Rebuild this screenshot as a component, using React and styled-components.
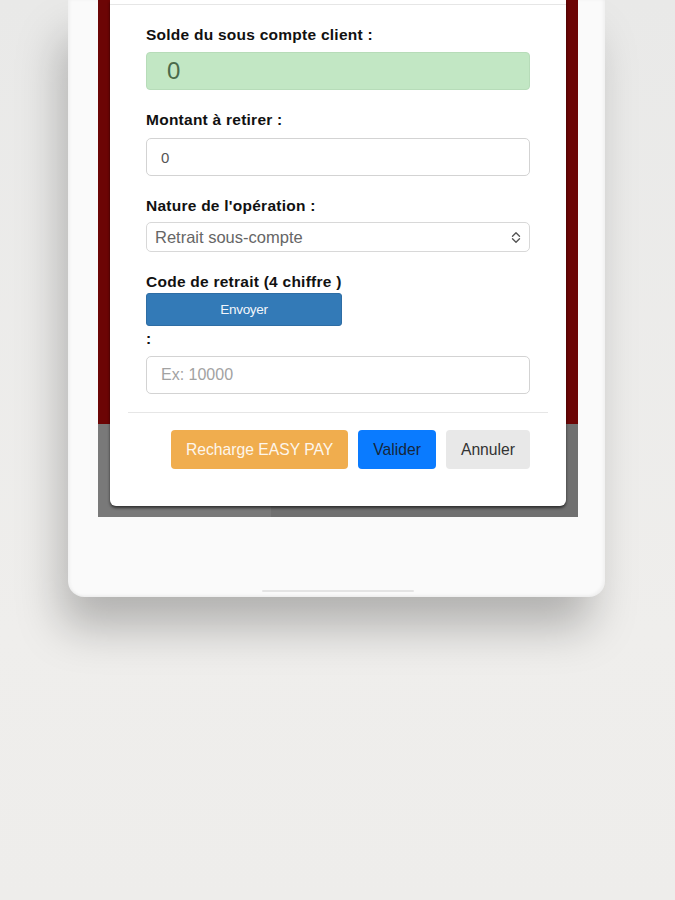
import styled, { createGlobalStyle } from 'styled-components';

const GlobalStyle = createGlobalStyle`
	html, body {
		margin: 0;
		padding: 0;
	}
	body {
		width: 675px;
		height: 900px;
		overflow: hidden;
		background: linear-gradient(to bottom, #e9e9e8 0%, #efeeec 70%, #eeedeb 100%);
		font-family: 'Liberation Sans', Arial, Helvetica, sans-serif;
	}
`;

const Stage = styled.div`
	height: 900px;
	padding-left: 68px;
`;

const Device = styled.div`
	width: 537px;
	height: 597px;
	box-sizing: border-box;
	padding-left: 30px;
	background: #fafafa;
	border-radius: 0 0 16px 16px;
	box-shadow: -10px 34px 46px -4px rgba(0, 0, 0, 0.26), inset 2px 0 3px rgba(0, 0, 0, 0.04),
		inset -2px -2px 3px rgba(0, 0, 0, 0.04);
	display: flex;
	flex-direction: column;
`;

const Screen = styled.div`
	width: 480px;
	height: 517px;
	box-sizing: border-box;
	padding: 0 12px 11px;
	overflow: hidden;
	background: linear-gradient(to bottom, #6c0505 0, #6c0505 424px, transparent 424px),
		linear-gradient(to right, #797979 0, #797979 173px, #707070 173px);
	display: flex;
	flex-direction: column;
	justify-content: flex-end;
`;

const HomeBar = styled.div`
	width: 152px;
	height: 2px;
	margin: 73px 0 0 164px;
	border-radius: 1px;
	background: #e4e4e4;
`;

const Modal = styled.div`
	background: #fff;
	border-radius: 0 0 6px 6px;
	box-shadow: 0 2px 3px rgba(0, 0, 0, 0.6);
	display: flex;
	flex-direction: column;
	flex-shrink: 0;
`;

const ModalHeader = styled.div`
	height: 4px;
	border-bottom: 1px solid #e6e6e6;
`;

const ModalBody = styled.div`
	padding: 20px 36px 18px;
	display: flex;
	flex-direction: column;
`;

const Field = styled.div`
	display: flex;
	flex-direction: column;
	margin-bottom: ${(p) => p.$mb ?? 20}px;
`;

const Label = styled.label`
	font-size: 15.5px;
	line-height: 20px;
	font-weight: 700;
	letter-spacing: 0.25px;
	color: #111;
	margin-bottom: ${(p) => p.$gap ?? 7}px;
`;

const Balance = styled.div`
	height: 38px;
	box-sizing: border-box;
	padding: 0 20px;
	display: flex;
	align-items: center;
	background: #c2e7c4;
	border: 1px solid #b7dcb9;
	border-radius: 4px;
	font-size: 24px;
	color: #4a6a4a;
`;

const Input = styled.input`
	height: 38px;
	box-sizing: border-box;
	margin-top: ${(p) => p.$top ?? 0}px;
	padding: 0 14px;
	border: 1px solid #d3d3d3;
	border-radius: 5px;
	background: #fff;
	font-family: inherit;
	font-size: ${(p) => p.$size ?? 15}px;
	color: #555;
	outline: none;
	&::placeholder {
		color: #a2a2a2;
	}
`;

const Select = styled.div`
	height: 30px;
	box-sizing: border-box;
	padding: 0 8px;
	display: flex;
	align-items: center;
	justify-content: space-between;
	border: 1px solid #d8d8d8;
	border-radius: 5px;
	font-size: 16.5px;
	color: #666;
`;

const SendButton = styled.button`
	width: 196px;
	height: 33px;
	margin-top: 1px;
	border: 1px solid #2e6da4;
	border-radius: 3px;
	background: #337ab7;
	color: #f2f6fb;
	font-family: inherit;
	font-size: 13.5px;
	letter-spacing: -0.3px;
	padding: 0;
`;

const Colon = styled.div`
	margin-top: 3px;
	font-size: 15.5px;
	line-height: 20px;
	font-weight: 700;
	color: #111;
`;

const ModalFooter = styled.div`
	margin: 0 18px;
	padding: 17px 18px 37px 0;
	border-top: 1px solid #e6e6e6;
	display: flex;
	justify-content: flex-end;
	gap: 10px;
`;

const tones = {
	warning: { bg: '#f0ad4e', fg: '#fdf6ec' },
	primary: { bg: '#0a7bff', fg: '#17263a' },
	light: { bg: '#e8e8e8', fg: '#333' },
};

const FooterButton = styled.button`
	height: 39px;
	padding: 0 15px;
	border: none;
	border-radius: 4px;
	background: ${(p) => tones[p.$tone].bg};
	color: ${(p) => tones[p.$tone].fg};
	font-family: inherit;
	font-size: 15.7px;
`;

const UpDown = () => (
	<svg width='10' height='13' viewBox='0 0 10 13' fill='none' stroke='#555' strokeWidth='1.4' strokeLinecap='round' strokeLinejoin='round'>
		<path d='M1.5 5.2 5 1.7 8.5 5.2' />
		<path d='M1.5 7.8 5 11.3 8.5 7.8' />
	</svg>
);

const App = () => (
	<>
		<GlobalStyle />
		<Stage>
			<Device>
				<Screen>
					<Modal>
						<ModalHeader />
						<ModalBody>
							<Field>
								<Label>Solde du sous compte client :</Label>
								<Balance>0</Balance>
							</Field>
							<Field>
								<Label $gap={8}>Montant à retirer :</Label>
								<Input readOnly value='0' />
							</Field>
							<Field>
								<Label $gap={6}>Nature de l'opération :</Label>
								<Select>
									<span>Retrait sous-compte</span>
									<UpDown />
								</Select>
							</Field>
							<Field $mb={0}>
								<Label $gap={0}>Code de retrait (4 chiffre )</Label>
								<SendButton>Envoyer</SendButton>
								<Colon>:</Colon>
								<Input $size={16} $top={7} placeholder='Ex: 10000' />
							</Field>
						</ModalBody>
						<ModalFooter>
							<FooterButton $tone='warning'>Recharge EASY PAY</FooterButton>
							<FooterButton $tone='primary'>Valider</FooterButton>
							<FooterButton $tone='light'>Annuler</FooterButton>
						</ModalFooter>
					</Modal>
				</Screen>
				<HomeBar />
			</Device>
		</Stage>
	</>
);

export default App;
